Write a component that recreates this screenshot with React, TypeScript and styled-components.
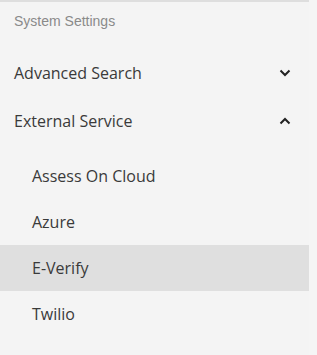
import React from "react";
import styled, { createGlobalStyle } from "styled-components";

const Global = createGlobalStyle`
  html, body { margin: 0; padding: 0; background: #f5f5f5; }
  #root { width: 317px; height: 355px; }
`;

const Page = styled.div`
  width: 317px;
  height: 355px;
  background: #f5f5f5;
  overflow: hidden;
`;

const Panel = styled.nav`
  width: 309px;
  height: 100%;
  background: #f4f4f4;
  border-top: 2px solid #dedede;
  box-sizing: border-box;
  display: flex;
  flex-direction: column;
`;

const SectionTitle = styled.div`
  font-family: "Liberation Sans", Arial, sans-serif;
  font-size: 14px;
  color: #8a8a8a;
  padding: 11px 14px 0;
  height: 36px;
  line-height: 16px;
`;

const Header = styled.div`
  display: flex;
  align-items: center;
  justify-content: space-between;
  height: 48px;
  padding: 0 18px 0 14px;
  font-family: "Open Sans", sans-serif;
  font-size: 16px;
  color: #3a3a3a;
`;

const SubList = styled.div<{ $top: number }>`
  display: flex;
  flex-direction: column;
  padding-top: ${(p) => p.$top}px;
`;

const SubItem = styled.div<{ $active?: boolean }>`
  display: flex;
  align-items: center;
  height: 46px;
  padding-left: 32px;
  font-family: "Open Sans", sans-serif;
  font-size: 16px;
  color: #3a3a3a;
  background: ${(p) => (p.$active ? "#dfdfdf" : "transparent")};
`;

const Chevron = ({ up }: { up?: boolean }) => (
  <svg width="12" height="8" viewBox="0 0 12 8">
    <path
      d={up ? "M1.5 6.5 L6 2 L10.5 6.5" : "M1.5 1.5 L6 6 L10.5 1.5"}
      fill="none"
      stroke="#222"
      strokeWidth="2"
    />
  </svg>
);

export default function App() {
  return (
    <Page>
      <Global />
      <Panel>
        <SectionTitle>System Settings</SectionTitle>
        <Header>
          <span>Advanced Search</span>
          <Chevron />
        </Header>
        <Header>
          <span>External Service</span>
          <Chevron up />
        </Header>
        <SubList $top={8}>
          <SubItem>Assess On Cloud</SubItem>
          <SubItem>Azure</SubItem>
          <SubItem $active>E-Verify</SubItem>
          <SubItem>Twilio</SubItem>
        </SubList>
      </Panel>
    </Page>
  );
}
